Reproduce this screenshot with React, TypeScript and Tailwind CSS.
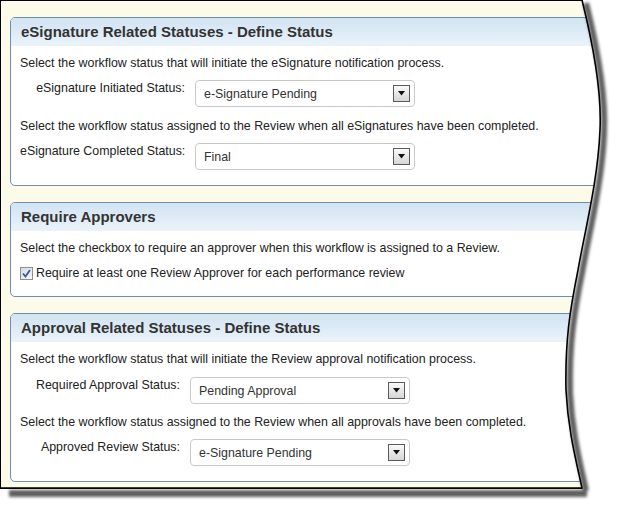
import React from "react";

const WAVE =
  "M582,0 C592,40 602,90 600,130 C598,180 585,230 578,270 C570,310 565,340 566,390 C568,430 576,460 582,488";

function Dropdown({ value, width }: { value: string; width: number }) {
  return (
    <div
      className="h-[27px] rounded-[4px] border border-[#c9c9c9] bg-white flex items-center justify-between pl-[8px] pr-[4px] text-[12.4px] text-[#333]"
      style={{ width }}
    >
      <span className="leading-[16px] pt-[1px]">{value}</span>
      <div className="w-[17px] h-[17px] border border-[#5a5a5a] bg-gradient-to-b from-[#fafafa] to-[#d6d6d6] flex items-center justify-center">
        <svg width="9" height="5" viewBox="0 0 9 5">
          <path d="M1 0 L8 0 L4.5 4.5 Z" fill="#111" />
        </svg>
      </div>
    </div>
  );
}

function Panel({ title, children }: { title: string; children: React.ReactNode }) {
  return (
    <div className="w-[680px] rounded-[5px] border border-[#6890b5] bg-white overflow-hidden">
      <div className="h-[28px] bg-gradient-to-b from-[#d2e3f2] to-[#eaf3fa] pl-[10px] flex items-center text-[15px] font-bold text-[#333]">
        {title}
      </div>
      <div className="pl-[9px] pt-[9px] pb-[15px] text-[12.4px] leading-[16px] text-[#222]">{children}</div>
    </div>
  );
}

function Row({ label, labelWidth, value, className }: { label: string; labelWidth: number; value: string; className: string }) {
  return (
    <div className={"flex items-start gap-[10px] " + className}>
      <div className="text-right leading-[16px] whitespace-nowrap" style={{ width: labelWidth }}>
        {label}
      </div>
      <Dropdown value={value} width={220} />
    </div>
  );
}

export default function App() {
  return (
    <div
      className="relative w-[617px] h-[506px] overflow-hidden bg-white"
      style={{ fontFamily: '"Liberation Sans", Arial, sans-serif' }}
    >
      <div className="w-[720px] h-[489px] border-l border-t border-b border-black bg-[#fcfae8] pl-[9px] pt-[16px] flex flex-col gap-[16px]">
        <Panel title="eSignature Related Statuses - Define Status">
          <div>Select the workflow status that will initiate the eSignature notification process.</div>
          <Row className="mt-[9px]" label="eSignature Initiated Status:" labelWidth={165} value="e-Signature Pending" />
          <div className="mt-[11px]">
            Select the workflow status assigned to the Review when all eSignatures have been completed.
          </div>
          <Row className="mt-[9px]" label="eSignature Completed Status:" labelWidth={165} value="Final" />
        </Panel>
        <Panel title="Require Approvers">
          <div>Select the checkbox to require an approver when this workflow is assigned to a Review.</div>
          <div className="mt-[9px] flex items-center gap-[3px]">
            <div className="w-[13px] h-[13px] border border-[#8f8f8f] bg-gradient-to-br from-[#d8dbe2] to-[#f6f6f8] flex items-center justify-center">
              <svg width="9" height="9" viewBox="0 0 9 9">
                <path d="M1 4.5 L3.5 7.5 L8 1" fill="none" stroke="#3a56a8" strokeWidth="1.8" />
              </svg>
            </div>
            <span>Require at least one Review Approver for each performance review</span>
          </div>
        </Panel>
        <Panel title="Approval Related Statuses - Define Status">
          <div>Select the workflow status that will initiate the Review approval notification process.</div>
          <Row className="mt-[10px]" label="Required Approval Status:" labelWidth={160} value="Pending Approval" />
          <div className="mt-[10px]">
            Select the workflow status assigned to the Review when all approvals have been completed.
          </div>
          <Row className="mt-[9px]" label="Approved Review Status:" labelWidth={160} value="e-Signature Pending" />
        </Panel>
      </div>
      <svg className="absolute left-0 top-0" width="617" height="506" viewBox="0 0 617 506">
        <defs>
          <filter id="blur" x="-20%" y="-20%" width="140%" height="140%">
            <feGaussianBlur stdDeviation="1.6" />
          </filter>
        </defs>
        <path d={WAVE + " L582,506 L617,506 L617,0 Z"} fill="#ffffff" />
        <rect x="0" y="489" width="617" height="17" fill="#ffffff" />
        <g filter="url(#blur)">
          <path d={WAVE} transform="translate(4,3)" fill="none" stroke="#5e5e5e" strokeWidth="6" />
          <rect x="9" y="490" width="578" height="7" fill="#5e5e5e" />
        </g>
        <path d={WAVE + " L0,488"} fill="none" stroke="#000" strokeWidth="1.6" />
      </svg>
    </div>
  );
}
